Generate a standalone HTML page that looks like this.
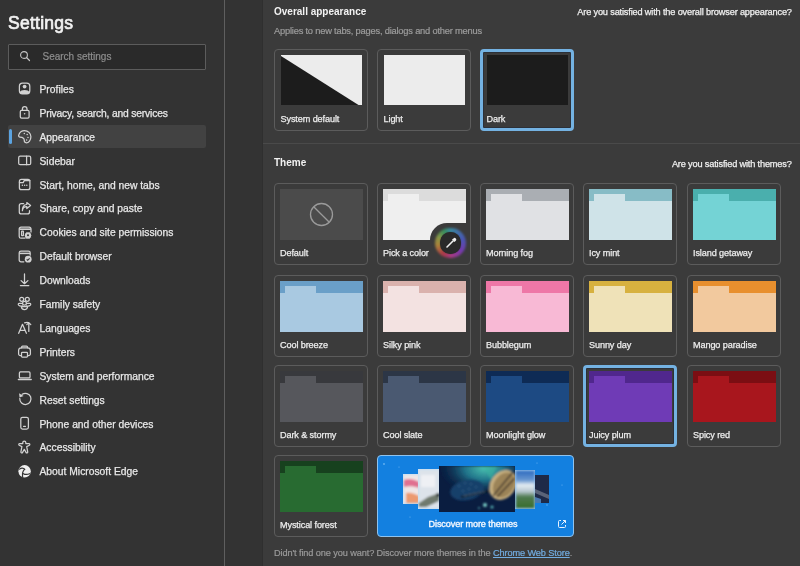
<!DOCTYPE html>
<html><head><meta charset="utf-8">
<style>
*{margin:0;padding:0;box-sizing:border-box}
html,body{width:800px;height:566px;overflow:hidden;background:#333333;font-family:"Liberation Sans",sans-serif;color:#e8e8e8}
.a{position:absolute;white-space:nowrap}
.wrap{position:absolute;left:0;top:0;width:800px;height:566px;will-change:transform}
.title{left:8px;top:16.8px;font-size:17.5px;font-weight:normal;color:#f2f2f2;line-height:12px;letter-spacing:0.25px;-webkit-text-stroke:0.7px #f2f2f2}
.search{left:8px;top:44px;width:198px;height:25.5px;border:1px solid #5c5c5c;background:#2a2a2a;border-radius:1px}
.stext{left:42.5px;top:51.3px;font-size:10px;color:#8e8e8e;line-height:12px;-webkit-text-stroke:0.2px #8e8e8e}
.nav{left:39.5px;font-size:10.3px;color:#e8e8e8;line-height:12px;-webkit-text-stroke:0.25px #e8e8e8}
.ico{left:14px;width:22px;height:22px}
.hl{left:8px;top:125px;width:197.5px;height:23px;background:#424242;border-radius:2px}
.ind{left:9px;top:128.5px;width:3px;height:15px;background:#5ba3e0;border-radius:2px}
.vline{left:224px;top:0;width:1px;height:566px;background:#5f5f5f}
.panel{left:263px;top:0;width:537px;height:566px;background:#3b3b3b}
.sep{left:263px;top:143px;width:537px;height:1px;background:#4a4a4a}
.h{letter-spacing:0px;font-size:10px;font-weight:bold;color:#f2f2f2;line-height:12px}
.sub{letter-spacing:-0.2px;font-size:9.3px;color:#9c9c9c;line-height:12px;-webkit-text-stroke:0.2px #9c9c9c}
.ask{letter-spacing:-0.16px;font-size:9.2px;color:#f0f0f0;line-height:12px;-webkit-text-stroke:0.25px #f0f0f0}
.card{width:94px;height:82px;border:1px solid #5c5c5c;border-radius:4px}
.sel{border:3px solid #74b2e2;box-shadow:inset 0 0 0 1px #2c3038}
.thumb{width:83px;height:51px;overflow:hidden}
.lbl{letter-spacing:-0.1px;font-size:9.1px;color:#ededed;line-height:12px;-webkit-text-stroke:0.25px #ededed}
.foot{letter-spacing:-0.11px;font-size:9.2px;color:#9a9a9a;line-height:12px;-webkit-text-stroke:0.2px #9a9a9a}
.link{color:#72ade2;-webkit-text-stroke:0.2px #72ade2;text-decoration:underline;text-decoration-thickness:0.8px;text-underline-offset:1px}
</style></head><body>
<div class="wrap">
<div class="a title">Settings</div>
<div class="a search"></div>
<svg class="a" style="left:19px;top:50px" width="12" height="12" viewBox="0 0 12 12"><circle cx="5" cy="5" r="3.4" fill="none" stroke="#c4c4c4" stroke-width="1.1"/><path d="M7.5 7.5l3 3" stroke="#c4c4c4" stroke-width="1.2" stroke-linecap="round"/></svg>
<div class="a stext">Search settings</div>
<div class="a hl"></div><div class="a ind"></div>
<div class="a nav" style="top:83.9px">Profiles</div>
<svg class="a ico" style="top:78px" viewBox="0 0 22 22"><rect x="5.4" y="5.2" width="10.4" height="10.6" rx="3" fill="none" stroke="#d2d2d2" stroke-width="1.25" stroke-linecap="round" stroke-linejoin="round"/><circle cx="10.6" cy="8.6" r="1.9" fill="#d2d2d2"/><path d="M5.8 14.2c.6-1.6 2.4-2.3 4.8-2.3s4.2.7 4.8 2.3v.6a1.2 1.2 0 0 1-1.2 1.2H7a1.2 1.2 0 0 1-1.2-1.2z" fill="#d2d2d2"/></svg>
<div class="a nav" style="top:107.8px;letter-spacing:-0.17px">Privacy, search, and services</div>
<svg class="a ico" style="top:102px" viewBox="0 0 22 22"><rect x="6.3" y="8.4" width="8.8" height="7.6" rx="1.3" fill="none" stroke="#d2d2d2" stroke-width="1.25" stroke-linecap="round" stroke-linejoin="round"/><path d="M8.4 8.4V7a2.3 2.3 0 0 1 4.6 0v1.4" fill="none" stroke="#d2d2d2" stroke-width="1.25" stroke-linecap="round" stroke-linejoin="round"/><circle cx="10.6" cy="11.8" r=".8" fill="#d2d2d2"/></svg>
<div class="a nav" style="top:131.7px">Appearance</div>
<svg class="a ico" style="top:126px" viewBox="0 0 22 22"><path d="M9.4 12.3C8.4 11.3 7 11.2 5.8 11.2 4.6 11.2 4.3 9.6 5 8.2 6 6 8 4.6 10.5 4.6c3.5 0 6.4 2.8 6.4 6.2 0 3.3-2.2 6-4.6 6-1.7 0-2.1-1.7-2.1-2.7 0-.8-.2-1.3-.8-1.8z" fill="none" stroke="#d2d2d2" stroke-width="1.25" stroke-linecap="round" stroke-linejoin="round"/><circle cx="10.3" cy="7.6" r=".75" fill="#d2d2d2"/><circle cx="13.2" cy="8.6" r=".75" fill="#d2d2d2"/><circle cx="14" cy="11.6" r=".75" fill="#d2d2d2"/><circle cx="12.6" cy="14" r=".75" fill="#d2d2d2"/></svg>
<div class="a nav" style="top:155.6px">Sidebar</div>
<svg class="a ico" style="top:150px" viewBox="0 0 22 22"><rect x="4.7" y="6.2" width="12" height="8.5" rx="1.5" fill="none" stroke="#d2d2d2" stroke-width="1.25" stroke-linecap="round" stroke-linejoin="round"/><path d="M12.6 6.2v8.5" fill="none" stroke="#d2d2d2" stroke-width="1.25" stroke-linecap="round" stroke-linejoin="round"/></svg>
<div class="a nav" style="top:179.5px">Start, home, and new tabs</div>
<svg class="a ico" style="top:174px" viewBox="0 0 22 22"><rect x="5.4" y="5.4" width="10.5" height="10.3" rx="2" fill="none" stroke="#d2d2d2" stroke-width="1.25" stroke-linecap="round" stroke-linejoin="round"/><path d="M5.4 8.6H9.2L10.2 6.6H15.9" fill="none" stroke="#d2d2d2" stroke-width="1.25" stroke-linecap="round" stroke-linejoin="round"/><circle cx="8.4" cy="11.2" r=".75" fill="#d2d2d2"/><circle cx="10.6" cy="11.2" r=".75" fill="#d2d2d2"/><circle cx="12.8" cy="11.2" r=".75" fill="#d2d2d2"/></svg>
<div class="a nav" style="top:203.4px">Share, copy and paste</div>
<svg class="a ico" style="top:198px" viewBox="0 0 22 22"><path d="M9.6 5.7H7.3a2 2 0 0 0-2 2v6.2a2 2 0 0 0 2 2h6.2a2 2 0 0 0 2-2v-1.2" fill="none" stroke="#d2d2d2" stroke-width="1.25" stroke-linecap="round" stroke-linejoin="round"/><path d="M8.4 12.6c.2-2.6 1.8-4 4.4-4v2l3.8-3-3.8-3v1.9c-3.1.1-4.6 2.6-4.4 6.1z" fill="none" stroke="#d2d2d2" stroke-width="1.25" stroke-linecap="round" stroke-linejoin="round"/></svg>
<div class="a nav" style="top:227.3px">Cookies and site permissions</div>
<svg class="a ico" style="top:222px" viewBox="0 0 22 22"><path d="M11 16.2H7a1.8 1.8 0 0 1-1.8-1.8V7a1.8 1.8 0 0 1 1.8-1.8h8.2A1.8 1.8 0 0 1 17 7v3" fill="none" stroke="#d2d2d2" stroke-width="1.25" stroke-linecap="round" stroke-linejoin="round"/><path d="M5.4 7.2h11.4" stroke="#d2d2d2" stroke-width="1.6"/><rect x="7.6" y="9.2" width="1.8" height="4.4" rx=".4" fill="none" stroke="#d2d2d2" stroke-width="1.25" stroke-linecap="round" stroke-linejoin="round"/><path d="M14 10l.8.6 1-.3.4 1 1 .4-.3 1 .6.8-.6.8.3 1-1 .4-.4 1-1-.3-.8.6-.8-.6-1 .3-.4-1-1-.4.3-1-.6-.8.6-.8-.3-1 1-.4.4-1 1 .3z" fill="#d2d2d2"/><circle cx="14" cy="13.3" r="1" fill="#333333"/></svg>
<div class="a nav" style="top:251.2px">Default browser</div>
<svg class="a ico" style="top:246px" viewBox="0 0 22 22"><path d="M9.8 15.8H7a1.8 1.8 0 0 1-1.8-1.8V6.8A1.8 1.8 0 0 1 7 5h7.4a1.8 1.8 0 0 1 1.8 1.8v2.4" fill="none" stroke="#d2d2d2" stroke-width="1.25" stroke-linecap="round" stroke-linejoin="round"/><path d="M5.4 7.4h10.6" stroke="#d2d2d2" stroke-width="1.5"/><circle cx="14.2" cy="13.2" r="3.4" fill="#d2d2d2"/><path d="M12.7 13.3l1 1 1.9-2" fill="none" stroke="#333333" stroke-width="1.1"/></svg>
<div class="a nav" style="top:275.1px">Downloads</div>
<svg class="a ico" style="top:270px" viewBox="0 0 22 22"><path d="M10.5 3.9V13M7.1 10.6l3.4 3.1 3.4-3.1M6.4 15.6h8.4" fill="none" stroke="#d2d2d2" stroke-width="1.25" stroke-linecap="round" stroke-linejoin="round"/></svg>
<div class="a nav" style="top:299.0px">Family safety</div>
<svg class="a ico" style="top:294px" viewBox="0 0 22 22"><circle cx="7.7" cy="5.3" r="2" fill="none" stroke="#d2d2d2" stroke-width="1.25" stroke-linecap="round" stroke-linejoin="round"/><circle cx="13.3" cy="5.3" r="2" fill="none" stroke="#d2d2d2" stroke-width="1.25" stroke-linecap="round" stroke-linejoin="round"/><circle cx="10.5" cy="9.3" r="1.9" fill="none" stroke="#d2d2d2" stroke-width="1.25" stroke-linecap="round" stroke-linejoin="round"/><path d="M8.4 9.4H5.2c-.9 0-1.2 1-.6 1.7.9.9 2.4 1.2 3.9.8M12.6 9.4h3.2c.9 0 1.2 1 .6 1.7-.9.9-2.4 1.2-3.9.8" fill="none" stroke="#d2d2d2" stroke-width="1.25" stroke-linecap="round" stroke-linejoin="round"/><path d="M7.4 12.6h6.2a3.1 3.1 0 0 1-6.2 0z" fill="none" stroke="#d2d2d2" stroke-width="1.25" stroke-linecap="round" stroke-linejoin="round"/></svg>
<div class="a nav" style="top:322.9px">Languages</div>
<svg class="a ico" style="top:318px" viewBox="0 0 22 22"><path d="M4.7 15.3L8.5 6.3l3.9 9M6.2 12.3h4.8" fill="none" stroke="#d2d2d2" stroke-width="1.25" stroke-linecap="round" stroke-linejoin="round"/><path d="M14.8 13.4V4.8M10.6 4.9c1.6-.6 3-.7 4.2-.1M12.8 6.6l2-2 2 2" fill="none" stroke="#d2d2d2" stroke-width="1.25" stroke-linecap="round" stroke-linejoin="round"/></svg>
<div class="a nav" style="top:346.8px">Printers</div>
<svg class="a ico" style="top:342px" viewBox="0 0 22 22"><path d="M7.6 5.8V5.1a1 1 0 0 1 1-1h3.9a1 1 0 0 1 1 1v.7" fill="none" stroke="#d2d2d2" stroke-width="1.25" stroke-linecap="round" stroke-linejoin="round"/><path d="M7.4 13.6H6.4a1.8 1.8 0 0 1-1.8-1.8V8.6a2.8 2.8 0 0 1 2.8-2.8h6.2a2.8 2.8 0 0 1 2.8 2.8v3.2a1.8 1.8 0 0 1-1.8 1.8h-1" fill="none" stroke="#d2d2d2" stroke-width="1.25" stroke-linecap="round" stroke-linejoin="round"/><rect x="7.5" y="10.4" width="6" height="4.6" rx=".8" fill="none" stroke="#d2d2d2" stroke-width="1.25" stroke-linecap="round" stroke-linejoin="round"/></svg>
<div class="a nav" style="top:370.7px">System and performance</div>
<svg class="a ico" style="top:366px" viewBox="0 0 22 22"><rect x="5.4" y="5.9" width="10.6" height="6" rx="1" fill="none" stroke="#d2d2d2" stroke-width="1.25" stroke-linecap="round" stroke-linejoin="round"/><path d="M4.4 13.5h12.8" stroke="#d2d2d2" stroke-width="1.4" stroke-linecap="round"/></svg>
<div class="a nav" style="top:394.6px">Reset settings</div>
<svg class="a ico" style="top:389px" viewBox="0 0 22 22"><path d="M5.8 9.5A5.6 5.6 0 1 0 8.2 5.3" fill="none" stroke="#d2d2d2" stroke-width="1.25" stroke-linecap="round" stroke-linejoin="round"/><path d="M5 4.2l.6 4.4 4-1.6z" fill="#d2d2d2"/></svg>
<div class="a nav" style="top:418.5px">Phone and other devices</div>
<svg class="a ico" style="top:413px" viewBox="0 0 22 22"><rect x="6.8" y="4.3" width="7.6" height="11.8" rx="1.8" fill="none" stroke="#d2d2d2" stroke-width="1.25" stroke-linecap="round" stroke-linejoin="round"/><path d="M9.6 13.4h1.8" fill="none" stroke="#d2d2d2" stroke-width="1.25" stroke-linecap="round" stroke-linejoin="round"/></svg>
<div class="a nav" style="top:442.4px">Accessibility</div>
<svg class="a ico" style="top:437px" viewBox="0 0 22 22"><path d="M10.3 4.1c.9 0 1.5.6 1.5 1.4v1.1h3.1c.9 0 1.3 1.2.5 1.7l-2.7 1.3 1 5.2c.2 1.1-1.2 1.6-1.7.6l-1.7-3.1-1.7 3.1c-.5 1-1.9.5-1.7-.6l1-5.2-2.7-1.3c-.8-.5-.4-1.7.5-1.7h3.1V5.5c0-.8.6-1.4 1.5-1.4z" fill="none" stroke="#d2d2d2" stroke-width="1.25" stroke-linecap="round" stroke-linejoin="round"/></svg>
<div class="a nav" style="top:466.3px">About Microsoft Edge</div>
<svg class="a ico" style="top:461px" viewBox="0 0 22 22"><circle cx="10.6" cy="10.3" r="6.2" fill="#efefef"/><path d="M5.6 8.2c1.6-1.6 3.8-1.5 5.2.2M10.6 8.2c-1.3 1.4-2.6 3.8-2 7.4M9 12.4c1.8 1.2 4.4 1.3 6.6.3" fill="none" stroke="#333333" stroke-width="1.2" stroke-linecap="round"/></svg>
<div class="a vline"></div>
<div class="a panel"></div><div class="a" style="left:261.5px;top:0;width:1.5px;height:566px;background:#2f2f2f"></div>
<div class="a h" style="left:274px;top:5.6px">Overall appearance</div>
<div class="a sub" style="left:274px;top:24.6px">Applies to new tabs, pages, dialogs and other menus</div>
<div class="a ask" style="right:8.2px;top:5.9px">Are you satisfied with the overall browser appearance?</div>
<div class="a card" style="left:274px;top:49px"></div>
<div class="a thumb" style="left:281px;top:55px;height:50px;width:81px;background:#ececec"><svg width="82" height="50" viewBox="0 0 82 50"><rect width="82" height="50" fill="#ececec"/><path d="M0 1L77.5 50H0z" fill="#1c1c1c"/></svg></div>
<div class="a lbl" style="left:280.5px;top:113.3px">System default</div>
<div class="a card" style="left:377px;top:49px"></div>
<div class="a thumb" style="left:384px;top:55px;height:50px;width:81px;background:#ececec"></div>
<div class="a lbl" style="left:383.5px;top:113.3px">Light</div>
<div class="a card sel" style="left:480px;top:49px"></div>
<div class="a thumb" style="left:487px;top:55px;height:50px;width:81px;background:#1c1c1c"></div>
<div class="a lbl" style="left:486.5px;top:113.3px">Dark</div>
<div class="a sep"></div>
<div class="a h" style="left:274px;top:156.8px">Theme</div>
<div class="a ask" style="right:8.3px;top:157.9px">Are you satisfied with themes?</div>
<div class="a card" style="left:274px;top:183px"></div>
<div class="a thumb" style="left:280px;top:188.5px;background:#4b4b4b"><svg style="position:absolute;left:29px;top:13px" width="25" height="25" viewBox="0 0 25 25"><circle cx="12.5" cy="12.5" r="11" fill="none" stroke="#9a9a9a" stroke-width="1.3"/><path d="M4.7 4.7L20.3 20.3" stroke="#9a9a9a" stroke-width="1.3"/></svg></div>
<div class="a lbl" style="left:280px;top:246.7px">Default</div>
<div class="a card" style="left:377px;top:183px"></div>
<div class="a thumb" style="left:383px;top:188.5px;background:#efefef"><div class="a" style="left:0;top:0;width:83px;height:12px;background:#dcdcdc"></div><div class="a" style="left:5px;top:5px;width:31px;height:8px;background:#efefef"></div></div>
<div class="a lbl" style="left:383px;top:246.7px">Pick a color</div>
<div class="a" style="left:430px;top:222.5px;width:36px;height:18px;background:#3b3b3b;border-top-left-radius:17px"></div>
<div class="a" style="left:435px;top:227.5px;width:30.5px;height:30.5px;border-radius:50%;background:conic-gradient(#3a8fa8,#4a5ac0 20%,#7a3ab8 35%,#b03a90 48%,#b83a48 60%,#b88a3a 72%,#90a048 82%,#389860 92%,#3a8fa8);filter:blur(1.1px);opacity:0.9"></div>
<div class="a" style="left:439.5px;top:232px;width:21.5px;height:21.5px;border-radius:50%;background:#2a2a2a;box-shadow:0 0 1px #2a2a2a"></div>
<svg class="a" style="left:443.5px;top:236px" width="14" height="14" viewBox="0 0 14 14"><path d="M3 11l6-6" stroke="#f0f0f0" stroke-width="1.6" stroke-linecap="round"/><path d="M8 3.5l2.5 2.5 1.3-1.3a1.6 1.6 0 0 0-2.3-2.3z" fill="#f0f0f0"/></svg>
<div class="a card" style="left:480px;top:183px"></div>
<div class="a thumb" style="left:486px;top:188.5px;background:#e0e1e4"><div class="a" style="left:0;top:0;width:83px;height:12px;background:#aaaeb3"></div><div class="a" style="left:5px;top:5px;width:31px;height:8px;background:#e0e1e4"></div></div>
<div class="a lbl" style="left:486px;top:246.7px">Morning fog</div>
<div class="a card" style="left:583px;top:183px"></div>
<div class="a thumb" style="left:589px;top:188.5px;background:#cfe3e8"><div class="a" style="left:0;top:0;width:83px;height:12px;background:#87bcc6"></div><div class="a" style="left:5px;top:5px;width:31px;height:8px;background:#cfe3e8"></div></div>
<div class="a lbl" style="left:589px;top:246.7px">Icy mint</div>
<div class="a card" style="left:687px;top:183px"></div>
<div class="a thumb" style="left:693px;top:188.5px;background:#74d3d5"><div class="a" style="left:0;top:0;width:83px;height:12px;background:#4aafad"></div><div class="a" style="left:5px;top:5px;width:31px;height:8px;background:#74d3d5"></div></div>
<div class="a lbl" style="left:693px;top:246.7px">Island getaway</div>
<div class="a card" style="left:274px;top:275px"></div>
<div class="a thumb" style="left:280px;top:280.5px;background:#a9c9e1"><div class="a" style="left:0;top:0;width:83px;height:12px;background:#6a9fc8"></div><div class="a" style="left:5px;top:5px;width:31px;height:8px;background:#a9c9e1"></div></div>
<div class="a lbl" style="left:280px;top:338.7px">Cool breeze</div>
<div class="a card" style="left:377px;top:275px"></div>
<div class="a thumb" style="left:383px;top:280.5px;background:#f3e2e1"><div class="a" style="left:0;top:0;width:83px;height:12px;background:#dab2ad"></div><div class="a" style="left:5px;top:5px;width:31px;height:8px;background:#f3e2e1"></div></div>
<div class="a lbl" style="left:383px;top:338.7px">Silky pink</div>
<div class="a card" style="left:480px;top:275px"></div>
<div class="a thumb" style="left:486px;top:280.5px;background:#f8b9d5"><div class="a" style="left:0;top:0;width:83px;height:12px;background:#ee77a7"></div><div class="a" style="left:5px;top:5px;width:31px;height:8px;background:#f8b9d5"></div></div>
<div class="a lbl" style="left:486px;top:338.7px">Bubblegum</div>
<div class="a card" style="left:583px;top:275px"></div>
<div class="a thumb" style="left:589px;top:280.5px;background:#efe2b8"><div class="a" style="left:0;top:0;width:83px;height:12px;background:#d7b13f"></div><div class="a" style="left:5px;top:5px;width:31px;height:8px;background:#efe2b8"></div></div>
<div class="a lbl" style="left:589px;top:338.7px">Sunny day</div>
<div class="a card" style="left:687px;top:275px"></div>
<div class="a thumb" style="left:693px;top:280.5px;background:#f2c99e"><div class="a" style="left:0;top:0;width:83px;height:12px;background:#e88f2e"></div><div class="a" style="left:5px;top:5px;width:31px;height:8px;background:#f2c99e"></div></div>
<div class="a lbl" style="left:693px;top:338.7px">Mango paradise</div>
<div class="a card" style="left:274px;top:365px"></div>
<div class="a thumb" style="left:280px;top:370.5px;background:#56575c"><div class="a" style="left:0;top:0;width:83px;height:12px;background:#38393d"></div><div class="a" style="left:5px;top:5px;width:31px;height:8px;background:#56575c"></div></div>
<div class="a lbl" style="left:280px;top:428.7px">Dark &amp; stormy</div>
<div class="a card" style="left:377px;top:365px"></div>
<div class="a thumb" style="left:383px;top:370.5px;background:#4a5971"><div class="a" style="left:0;top:0;width:83px;height:12px;background:#2c3646"></div><div class="a" style="left:5px;top:5px;width:31px;height:8px;background:#4a5971"></div></div>
<div class="a lbl" style="left:383px;top:428.7px">Cool slate</div>
<div class="a card" style="left:480px;top:365px"></div>
<div class="a thumb" style="left:486px;top:370.5px;background:#1d4a83"><div class="a" style="left:0;top:0;width:83px;height:12px;background:#0e2b55"></div><div class="a" style="left:5px;top:5px;width:31px;height:8px;background:#1d4a83"></div></div>
<div class="a lbl" style="left:486px;top:428.7px">Moonlight glow</div>
<div class="a card sel" style="left:583px;top:365px"></div>
<div class="a thumb" style="left:589px;top:370.5px;background:#6f3bb6"><div class="a" style="left:0;top:0;width:83px;height:12px;background:#50278d"></div><div class="a" style="left:5px;top:5px;width:31px;height:8px;background:#6f3bb6"></div></div>
<div class="a lbl" style="left:589px;top:428.7px">Juicy plum</div>
<div class="a card" style="left:687px;top:365px"></div>
<div class="a thumb" style="left:693px;top:370.5px;background:#a8161d"><div class="a" style="left:0;top:0;width:83px;height:12px;background:#7b0e13"></div><div class="a" style="left:5px;top:5px;width:31px;height:8px;background:#a8161d"></div></div>
<div class="a lbl" style="left:693px;top:428.7px">Spicy red</div>
<div class="a card" style="left:274px;top:455px"></div>
<div class="a thumb" style="left:280px;top:460.5px;background:#286b31"><div class="a" style="left:0;top:0;width:83px;height:12px;background:#17411e"></div><div class="a" style="left:5px;top:5px;width:31px;height:8px;background:#286b31"></div></div>
<div class="a lbl" style="left:280px;top:518.7px">Mystical forest</div>
<div class="a" style="left:377px;top:455px;width:197px;height:82px;border:1.5px solid #8fc3ee;border-radius:4px;background:#1380e0"></div>
<svg class="a" style="left:377px;top:455px" width="197" height="82"><g fill="#7fc0f5" opacity="0.8"><circle cx="7" cy="9" r="0.9"/><circle cx="22" cy="12" r="0.6"/><circle cx="33" cy="62" r="0.6"/><circle cx="170" cy="50" r="0.7"/><circle cx="160" cy="8" r="0.6"/><circle cx="185" cy="30" r="0.6"/></g></svg>
<div class="a lbl" style="left:428.5px;top:517.6px;color:#f4f8ff;-webkit-text-stroke:0.35px #f4f8ff">Discover more themes</div>
<svg class="a" style="left:403px;top:474px" width="16" height="30" viewBox="0 0 16 30"><defs><filter id="b1"><feGaussianBlur stdDeviation="0.8"/></filter></defs><rect width="16" height="30" fill="#c9def2"/><g filter="url(#b1)"><rect x="1" y="1" width="15" height="28" fill="#efe6e6"/><path d="M1 6C5 4 11 5 16 8V14C11 12 5 12 1 13z" fill="#e07090"/><path d="M3 19C8 18 12 20 16 22V29H3z" fill="#ec9a70"/></g></svg>
<svg class="a" style="left:418px;top:469px" width="21" height="40" viewBox="0 0 21 40"><defs><filter id="b2"><feGaussianBlur stdDeviation="0.9"/></filter></defs><rect width="21" height="40" fill="#c9def2"/><g filter="url(#b2)"><rect x="1" y="1" width="20" height="38" fill="#dde3ea"/><rect x="3" y="6" width="14" height="12" fill="#eef0f4"/><path d="M1 34L10 28L21 24V32L8 38H1z" fill="#707a6e"/><circle cx="20" cy="26" r="2" fill="#303838"/></g></svg>
<svg class="a" style="left:535px;top:475px" width="14" height="28" viewBox="0 0 14 28"><defs><filter id="b3"><feGaussianBlur stdDeviation="0.7"/></filter></defs><rect width="14" height="28" fill="#1e2a48"/><g filter="url(#b3)"><path d="M0 14L14 20V24L0 18z" fill="#5a6478"/><path d="M0 22L6 24V28H0z" fill="#4a7ab0"/></g></svg>
<svg class="a" style="left:514.5px;top:469.5px" width="20.5" height="39" viewBox="0 0 20.5 39"><defs><filter id="b4"><feGaussianBlur stdDeviation="0.8"/></filter><linearGradient id="g4" x1="0" y1="0" x2="0" y2="1"><stop offset="0" stop-color="#2f6cc0"/><stop offset="0.25" stop-color="#6a98d0"/><stop offset="0.38" stop-color="#e4ecf2"/><stop offset="0.55" stop-color="#b8c8d0"/><stop offset="0.7" stop-color="#4f7a50"/><stop offset="1" stop-color="#3a6e2c"/></linearGradient></defs><rect width="20.5" height="39" fill="#8fbce8"/><rect x="1" y="1" width="18.5" height="37" fill="url(#g4)" filter="url(#b4)"/></svg>
<svg class="a" style="left:438.5px;top:465.5px" width="76" height="46" viewBox="0 0 76 46"><defs><filter id="bl"><feGaussianBlur stdDeviation="0.8"/></filter><radialGradient id="tg" cx="0.6" cy="0.05" r="0.6"><stop offset="0" stop-color="#48c0b0"/><stop offset="0.45" stop-color="#1f7088"/><stop offset="1" stop-color="#0c2a50" stop-opacity="0"/></radialGradient></defs><rect width="76" height="46" fill="#0a1d40"/><g filter="url(#bl)"><rect width="76" height="46" fill="url(#tg)"/><path d="M44 0L52 14L58 0z" fill="#3ab0a0" opacity="0.6"/><ellipse cx="28" cy="24" rx="17" ry="10" transform="rotate(-12 28 24)" fill="#18406a"/><g fill="#3a6a90"><circle cx="20" cy="20" r=".8"/><circle cx="26" cy="17" r=".8"/><circle cx="32" cy="18" r=".8"/><circle cx="24" cy="25" r=".8"/><circle cx="30" cy="23" r=".8"/><circle cx="37" cy="21" r=".8"/></g><path d="M22 31L50 25" stroke="#08121f" stroke-width="2"/><path d="M24 30L46 25.5" stroke="#6a8aa0" stroke-width="0.7"/><ellipse cx="64" cy="19" rx="12.5" ry="16" transform="rotate(35 64 19)" fill="#c8b080"/><ellipse cx="65" cy="19" rx="10" ry="13.5" transform="rotate(35 65 19)" fill="#9c8458"/><path d="M54 30L74 6M58 31L76 12" stroke="#3a3028" stroke-width="1.4"/><circle cx="46" cy="39" r="2" fill="#7ad0c8"/><circle cx="53" cy="41" r="1.5" fill="#5ab8b8"/><circle cx="40" cy="42" r="1" fill="#4aa0a8"/></g></svg>
<svg class="a" style="left:557px;top:519px" width="10" height="10" viewBox="0 0 10 10"><path d="M4 1.5H2.5a1 1 0 0 0-1 1v5a1 1 0 0 0 1 1h5a1 1 0 0 0 1-1V6M6 1.5h2.5V4M8.5 1.5L4.5 5.5" fill="none" stroke="#e8f2ff" stroke-width="1"/></svg>
<div class="a foot" style="left:274px;top:547px">Didn't find one you want? Discover more themes in the <span class="link">Chrome Web Store</span>.</div>
</div></body></html>
